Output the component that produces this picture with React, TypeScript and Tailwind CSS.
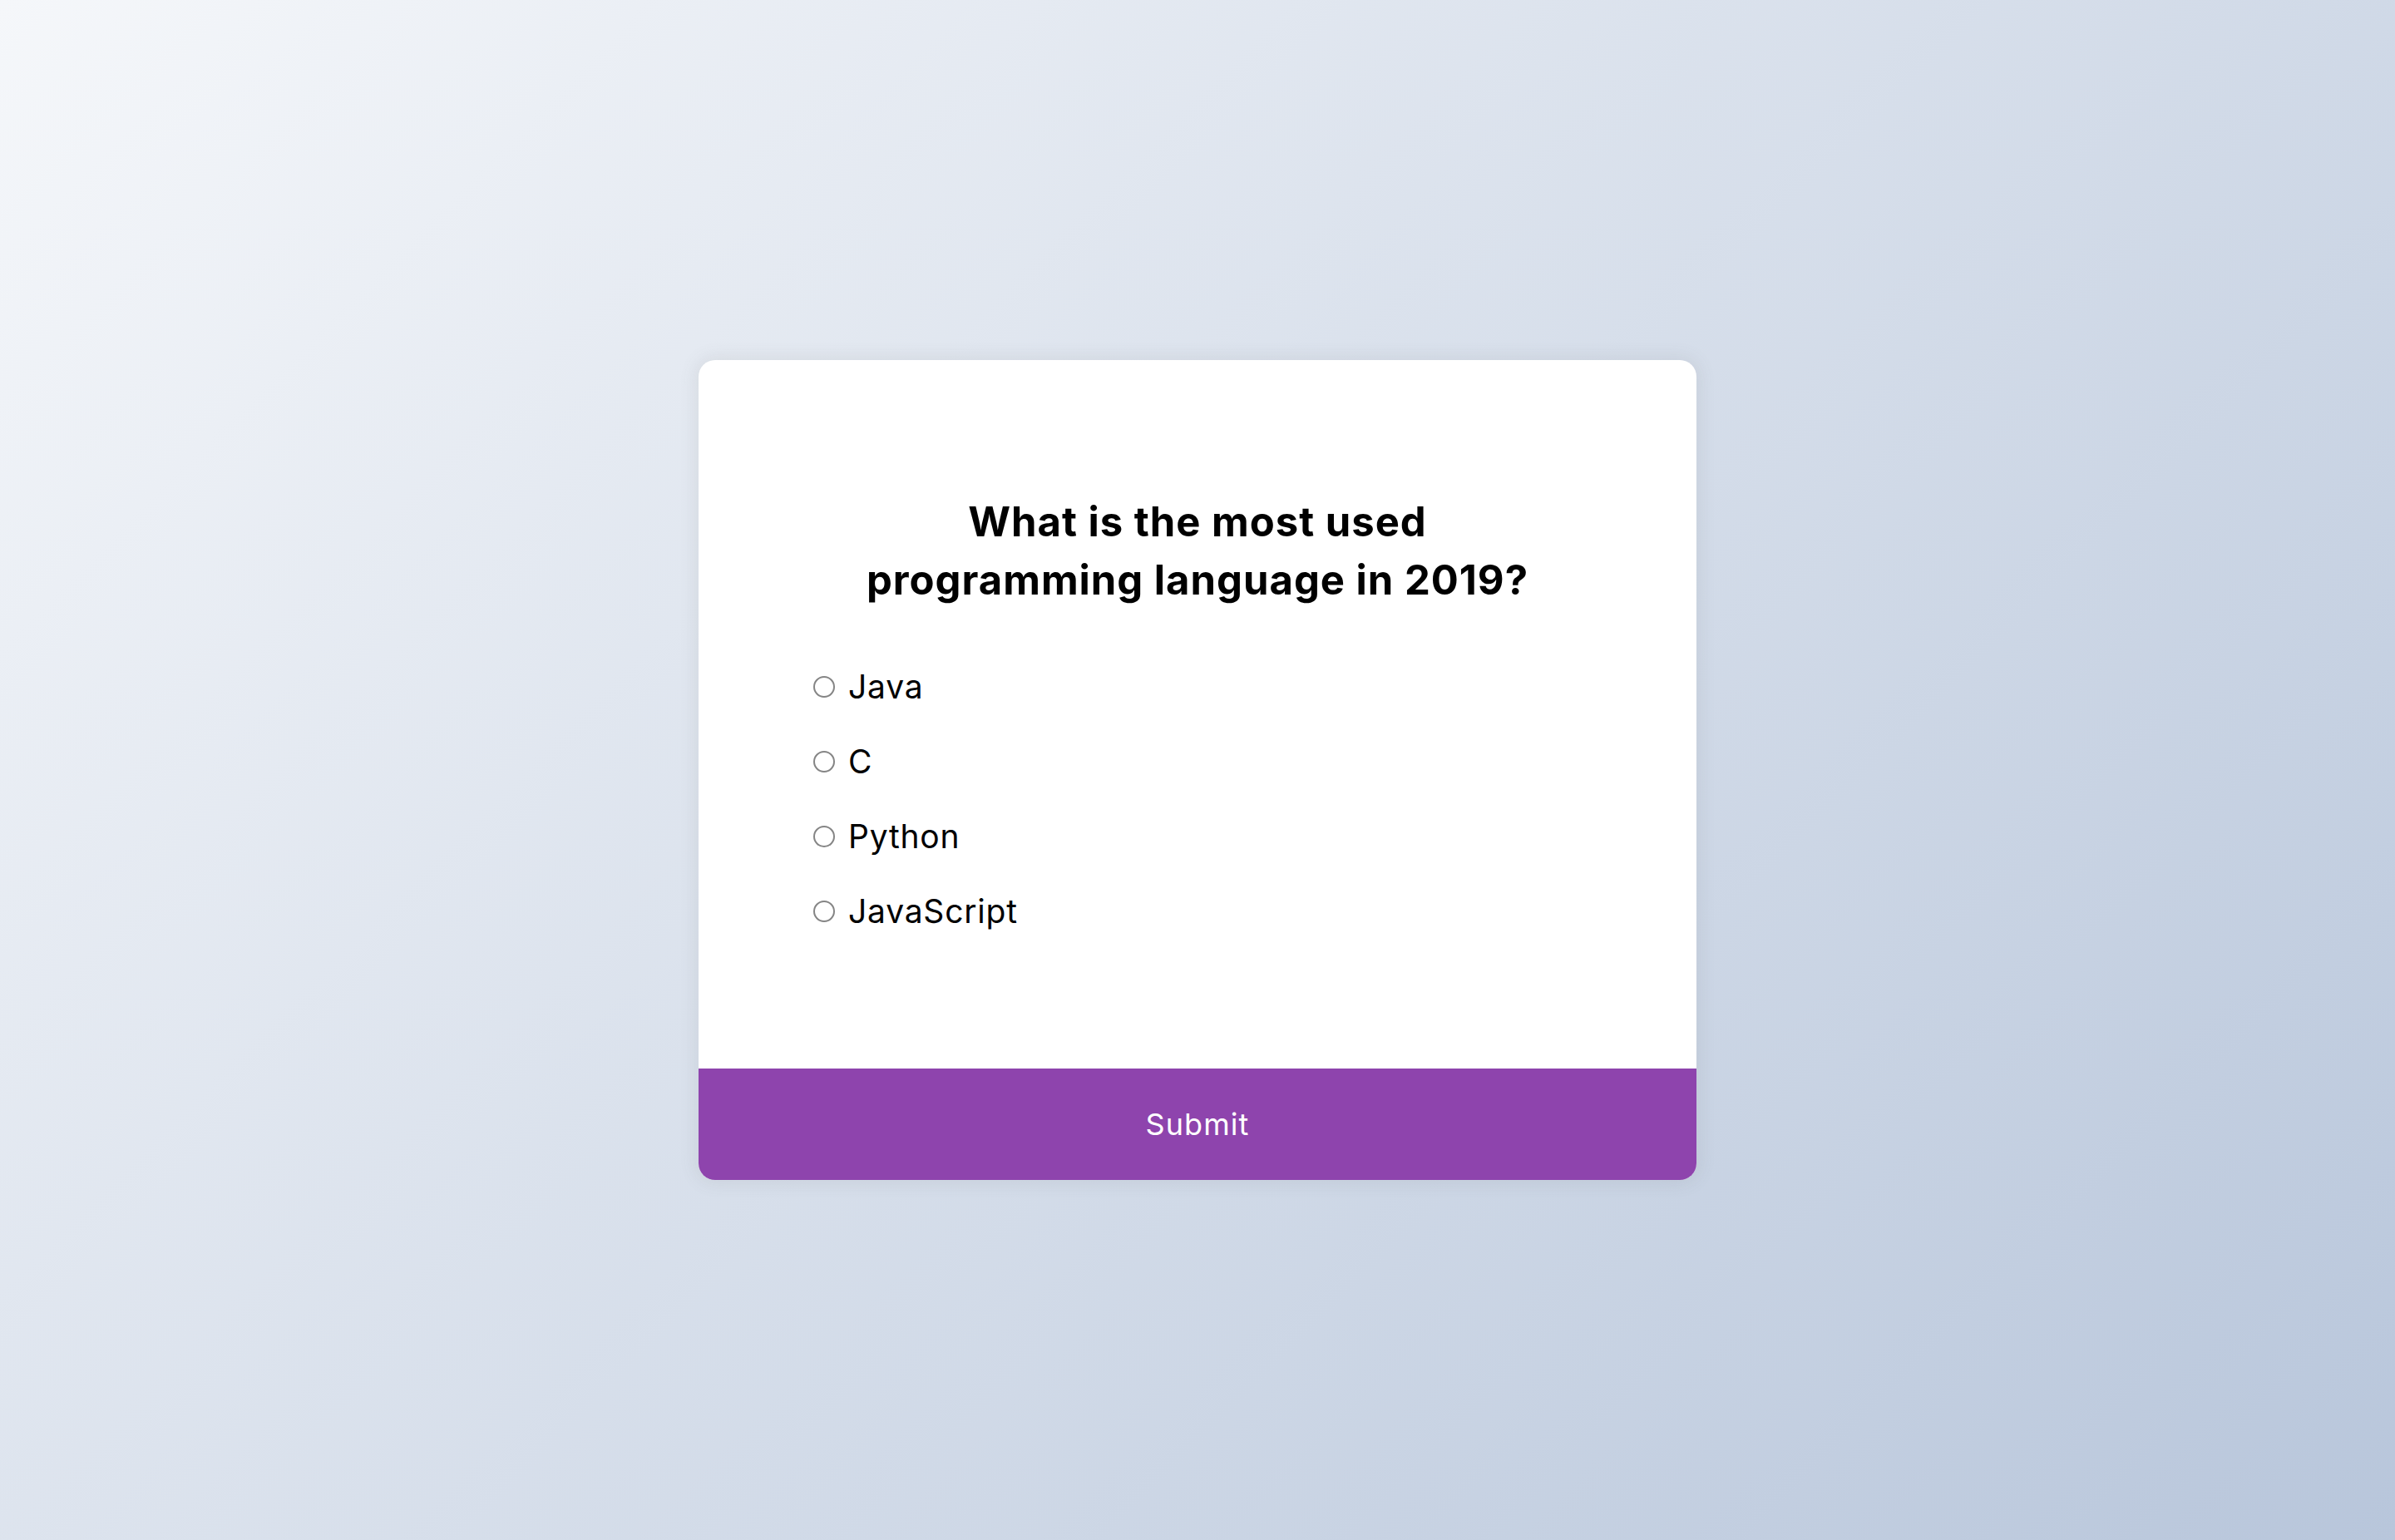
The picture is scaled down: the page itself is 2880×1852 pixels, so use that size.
import { useState } from 'react'

const options = ['Java', 'C', 'Python', 'JavaScript']

export default function App() {
  const [answer, setAnswer] = useState<string | null>(null)

  return (
    <div className="flex h-screen w-full items-center justify-center bg-[linear-gradient(315deg,#b8c6db_0%,#f5f7fa_100%)] font-['Inter',sans-serif] text-black">
      <div className="w-[1200px] overflow-hidden rounded-[20px] bg-white shadow-[0_0_20px_4px_rgba(100,100,100,0.1)]">
        <div className="p-[128px]">
          <h2 className="p-[32px] text-center text-[49px] font-bold leading-[70px] tracking-[0.02em]">
            What is the most used
            <br />
            programming language in 2019?
          </h2>
          <ul className="my-[32px] flex flex-col gap-[32px]">
            {options.map((opt) => (
              <li key={opt} className="flex items-center text-[39px] leading-[58px] tracking-[0.02em]">
                <label className="flex cursor-pointer items-center">
                  <input
                    type="radio"
                    name="answer"
                    checked={answer === opt}
                    onChange={() => setAnswer(opt)}
                    className="ml-[10px] mr-[16px] h-[26px] w-[26px] cursor-pointer appearance-none rounded-full border-2 border-[#858585] checked:border-[8px] checked:border-[#8e44ad]"
                  />
                  <span>{opt}</span>
                </label>
              </li>
            ))}
          </ul>
        </div>
        <button className="block w-full cursor-pointer bg-[#8e44ad] py-[41px] text-[36px] leading-[52px] tracking-[0.03em] text-white">
          Submit
        </button>
      </div>
    </div>
  )
}
